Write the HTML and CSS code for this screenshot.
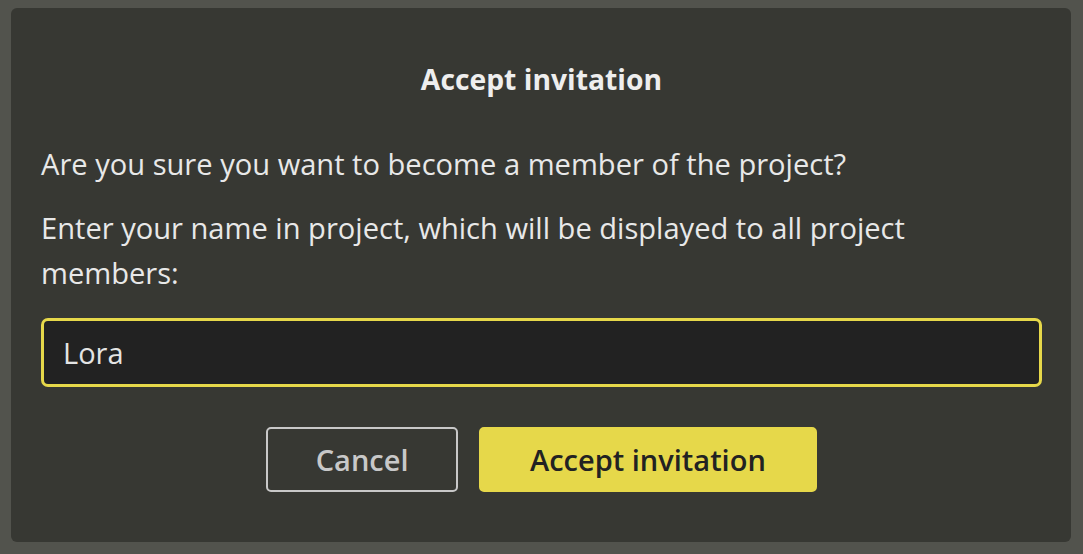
FILE: index.html
```html
<!DOCTYPE html>
<html lang="en">
<head>
<meta charset="utf-8">
<title>Accept invitation</title>
<link rel="stylesheet" href="styles.css">
</head>
<body>
<div class="dialog">
  <h2 class="title">Accept invitation</h2>
  <p class="text first">Are you sure you want to become a member of the project?</p>
  <p class="text second">Enter your name in project, which will be displayed to all project members:</p>
  <input class="name-input" type="text" value="Lora">
  <div class="actions">
    <button class="btn btn-cancel" type="button">Cancel</button>
    <button class="btn btn-accept" type="button">Accept invitation</button>
  </div>
</div>
</body>
</html>
```
FILE: styles.css
```css
html, body {
  margin: 0;
  height: 100%;
}
body {
  background: #52534d;
  padding: 8px 12px 12px 11px;
  box-sizing: border-box;
  font-family: "Open Sans", "Noto Sans", sans-serif;
}
.dialog {
  width: 1060px;
  height: 534px;
  box-sizing: border-box;
  background: #373833;
  border-radius: 6px;
  padding: 52px 29px 0 30px;
  display: flex;
  flex-direction: column;
}
.title {
  margin: 0;
  font-size: 28.3px;
  line-height: 38px;
  font-weight: 700;
  text-align: center;
  color: #eeeeee;
}
.text {
  margin: 0;
  font-size: 29.1px;
  line-height: 45px;
  color: #e8e8e8;
}
.first {
  margin-top: 44px;
}
.second {
  margin-top: 19px;
  padding-right: 100px;
}
.name-input {
  margin-top: 22px;
  height: 69px;
  box-sizing: border-box;
  border: 3px solid #e6d84a;
  border-radius: 7px;
  background: #222222;
  color: #e4e4e4;
  font-family: inherit;
  font-size: 29px;
  padding: 0 19px;
  outline: none;
}
.actions {
  margin-top: 40px;
  display: flex;
  justify-content: center;
  gap: 21px;
}
.btn {
  height: 65px;
  box-sizing: border-box;
  border-radius: 5px;
  font-family: inherit;
  font-size: 29px;
  font-weight: 600;
  padding: 0 49px;
  cursor: pointer;
}
.btn-cancel {
  background: transparent;
  border: 2px solid #c8c8c8;
  color: #c8c8c8;
  padding: 0 47.5px;
}
.btn-accept {
  background: #e6d84a;
  border: 2px solid #e6d84a;
  color: #222222;
  padding: 0 49px;
}
```
